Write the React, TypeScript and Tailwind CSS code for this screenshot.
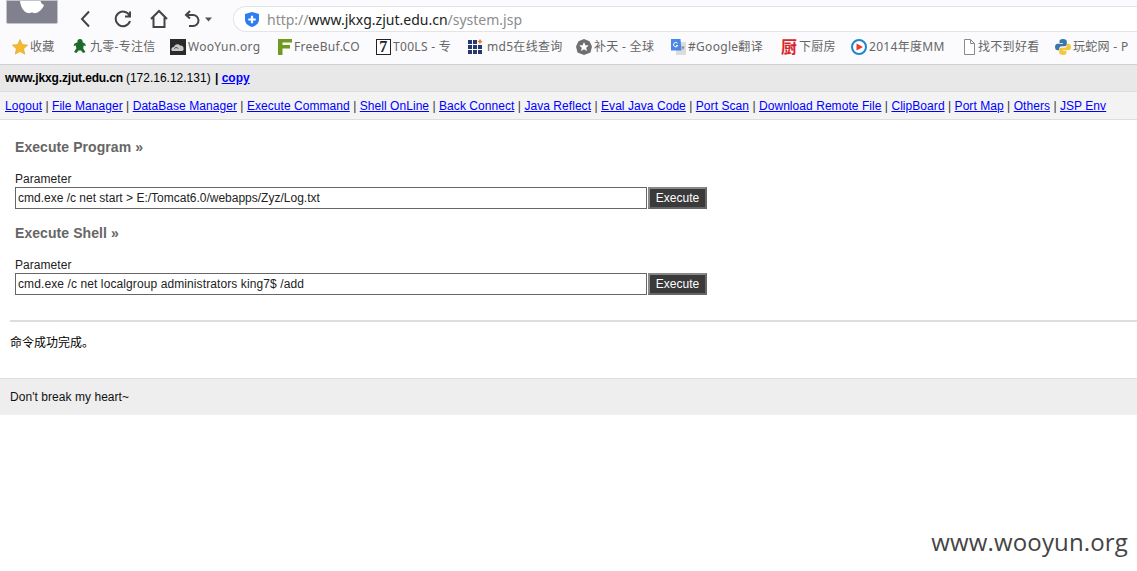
const navLinks = [
  "Logout",
  "File Manager",
  "DataBase Manager",
  "Execute Command",
  "Shell OnLine",
  "Back Connect",
  "Java Reflect",
  "Eval Java Code",
  "Port Scan",
  "Download Remote File",
  "ClipBoard",
  "Port Map",
  "Others",
  "JSP Env",
];

const FavIcon = ({ name }: { name: string }) => {
  if (name === "star")
    return (
      <svg width="16" height="16" viewBox="0 0 16 16">
        <path d="M8 .5l2.300 5 5.400.6-4 3.700 1.100 5.400L8 12.500l-4.800 2.700 1.100-5.400-4-3.700 5.400-.6z" fill="#f5b82e" stroke="#d99a1c" strokeWidth=".5" />
      </svg>
    );
  if (name === "turtle")
    return (
      <svg width="16" height="16" viewBox="0 0 16 16">
        <path d="M8 0c2 0 3 1.500 2.600 3.200L13 4.500l1 2.500-2.300-.6-.5 3.100 2.300 3.500-2.500 1-2-2.500H6.500l-2 2.500-2.500-1 2.300-3.500-.5-3.100L1.500 7l1-2.500 3-1.300C5 1.500 6 0 8 0z" fill="#1c6b2c" />
      </svg>
    );
  if (name === "wooyun")
    return (
      <svg width="16" height="16" viewBox="0 0 16 16">
        <rect width="16" height="16" fill="#2b2b2b" />
        <path d="M2 12c-1.500-2 0-4 2-4 .5-2.500 4-4 6-1.500 2-.5 4 1 3.500 3 .5 1.500-.5 2.500-1.500 2.500z" fill="#c9c9c9" />
        <path d="M4.500 9.500c1-1.500 3-1 3.500 0" fill="none" stroke="#2b2b2b" />
      </svg>
    );
  if (name === "freebuf")
    return (
      <svg width="14" height="16" viewBox="0 0 14 16">
        <path d="M0 0h14v3.500H4.500V6H12v3.500H4.500V16H0z" fill="#6f9a1f" />
      </svg>
    );
  if (name === "tools")
    return (
      <span className="flex h-[16px] w-[15px] items-center justify-center border border-[#222222] bg-white font-['Liberation_Serif',serif] text-[16px] leading-none font-bold text-[#222222]">
        7
      </span>
    );
  if (name === "md5")
    return (
      <svg width="17" height="16" viewBox="0 0 17 16">
        <g fill="#27386f">
          <rect x="0" y="1" width="4" height="4" />
          <rect x="5" y="1" width="4" height="4" />
          <rect x="0" y="6" width="4" height="4" />
          <rect x="5" y="6" width="4" height="4" />
          <rect x="10" y="6" width="4" height="4" />
          <rect x="0" y="11" width="4" height="4" />
          <rect x="5" y="11" width="4" height="4" />
          <rect x="10" y="11" width="4" height="4" />
        </g>
        <path d="M12 0l1 1.500 1.500 1-1.500 1-1 1.500-1-1.500-1.500-1 1.500-1z" fill="#e8792a" />
      </svg>
    );
  if (name === "butian")
    return (
      <svg width="16" height="16" viewBox="0 0 16 16">
        <path d="M8 0l5.500 2.200L16 7.500l-1.500 6L8 16l-6.500-2.500L0 7.500l2.500-5.300z" fill="#6e6e72" />
        <path d="M8 3l1.400 3.200 3.400.3-2.600 2.200.8 3.300L8 10.300 5 12l.8-3.300-2.600-2.200 3.400-.3z" fill="#ffffff" />
      </svg>
    );
  if (name === "google")
    return (
      <svg width="15" height="16" viewBox="0 0 15 16">
        <rect x="5" y="3" width="10" height="13" fill="#dcdcdc" />
        <path d="M0 0h9.500l1 11.500H0z" fill="#4a86e8" />
        <path d="M6.500 4.300A2.200 2.200 0 1 0 6.800 6.500H5" fill="none" stroke="#ffffff" strokeWidth="1" />
        <path d="M10.500 7.500h3l-1.500 3.500z" fill="#8a8a8a" />
      </svg>
    );
  if (name === "kitchen")
    return <span className="w-[16px] shrink-0 text-[16px] leading-none font-bold tracking-normal text-[#d9262c]">厨</span>;
  if (name === "youku")
    return (
      <svg width="16" height="16" viewBox="0 0 16 16">
        <circle cx="8" cy="8" r="7" fill="#ffffff" stroke="#1c86d1" strokeWidth="2" />
        <path d="M5.500 4.500L12 8l-6.500 3.500z" fill="#e8392f" />
      </svg>
    );
  if (name === "page")
    return (
      <svg width="14" height="16" viewBox="0 0 14 16" fill="#ffffff" stroke="#8a8a8a">
        <path d="M2.500 .5h6l4 4v11h-10zM8.500 .5v4h4" />
      </svg>
    );
  return (
    <svg width="16" height="16" viewBox="0 0 16 16">
      <path d="M8 0C5 0 4.500 1 4.500 2.500V4H8v.7H2.500C1 4.700 0 6 0 8s1 3.300 2.500 3.300h1.700V9.500c0-1.300 1-2.300 2.300-2.300h3.300c1.200 0 2-.9 2-2V2.500C11.800 1 10.500 0 8 0z" fill="#3a78ab" />
      <path d="M8 16c3 0 3.500-1 3.500-2.500V12H8v-.7h5.500c1.500 0 2.500-1.300 2.500-3.300s-1-3.300-2.500-3.300h-1.700v1.800c0 1.300-1 2.300-2.300 2.300H6.200c-1.200 0-2 .9-2 2v2.700C4.200 15 5.500 16 8 16z" fill="#f2c83c" />
    </svg>
  );
};

const bookmarks = [
  { icon: "star", label: "收藏", width: "w-[60px]" },
  { icon: "turtle", label: "九零-专注信", width: "w-[98px]" },
  { icon: "wooyun", label: "WooYun.org", width: "w-[108px]" },
  { icon: "freebuf", label: "FreeBuf.CO", width: "w-[98px]" },
  { icon: "tools", label: "T00LS - 专", width: "w-[92px]" },
  { icon: "md5", label: "md5在线查询", width: "w-[108px]" },
  { icon: "butian", label: "补天 - 全球", width: "w-[95px]" },
  { icon: "google", label: "#Google翻译", width: "w-[110px]" },
  { icon: "kitchen", label: "下厨房", width: "w-[70px]" },
  { icon: "youku", label: "2014年度MM", width: "w-[111px]" },
  { icon: "page", label: "找不到好看", width: "w-[93px]" },
  { icon: "python", label: "玩蛇网 - P", width: "w-[82px]" },
];

const browserFont = "font-['Noto_Sans','Noto_Sans_CJK_SC',sans-serif]";

const ExecForm = ({ title, value, valueClass }: { title: string; value: string; valueClass?: string }) => (
  <div>
    <h2 className="text-[14px] leading-[16px] font-bold tracking-[0.07px] text-[#666666]">{title} »</h2>
    <p className="mt-[17px] text-[12px] leading-[14px] tracking-[0.05px] text-[#222222]">Parameter</p>
    <div className="mt-[1px] flex h-[22px] items-stretch">
      <input
        readOnly
        value={value}
        className={`w-[632px] border border-[#666666] bg-white px-[2px] text-[12px] text-[#222222] outline-none ${valueClass ?? ""}`}
      />
      <button className="ml-[1px] w-[59px] border-2 border-t-[#888888] border-r-[#666666] border-b-[#666666] border-l-[#888888] bg-[#3a3a3a] text-[12px] text-white">
        Execute
      </button>
    </div>
  </div>
);

export default function App() {
  return (
    <div className="relative h-[571px] w-[1137px] overflow-hidden bg-white font-['Liberation_Sans','Noto_Sans_CJK_SC',sans-serif]">
      <div className="h-[65px] border-b border-[#cfcfd6] bg-[#fbfbfd]">
        <div className="flex h-[32px] items-start">
          <div className="ml-[6px] flex h-[24px] w-[52px] justify-center overflow-hidden rounded-b-[2px] border border-[#c4c4c8] bg-[#80808e]">
            <svg width="30" height="13" viewBox="0 0 30 13">
              <path d="M3 0c.5 5 3 11 8 12 2 .5 3-.5 4-.5s2 1 4 .5c4-1 7-5 8-8-2-1-3-2-3.500-4z" fill="#ffffff" />
            </svg>
          </div>
          <div className="ml-[18px] mt-[9px] flex items-center text-[#444444]">
            <svg width="20" height="20" viewBox="0 0 20 20" fill="none" stroke="currentColor" strokeWidth="2">
              <path d="M13 2.500L6 10l7 7.500" />
            </svg>
            <svg className="ml-[17px]" width="20" height="20" viewBox="0 0 20 20" fill="none" stroke="currentColor" strokeWidth="2">
              <path d="M16.500 6.500A7.300 7.300 0 1 0 17 12M17 2.500v5h-5" />
            </svg>
            <svg className="ml-[16px]" width="20" height="20" viewBox="0 0 20 20" fill="none" stroke="currentColor" strokeWidth="2">
              <path d="M2 10l8-8 8 8M4.500 8.500V18h11V8.500" />
            </svg>
            <svg className="ml-[15px]" width="18" height="20" viewBox="0 0 18 20" fill="none" stroke="currentColor" strokeWidth="2">
              <path d="M6 2L2 6l4 3.500M2.500 6H9a5 5 0 0 1 0 11H5" />
            </svg>
            <svg className="ml-[3px]" width="7" height="5" viewBox="0 0 7 5">
              <path d="M0 .5h7L3.500 4.500z" fill="#555555" />
            </svg>
          </div>
          <div className={`ml-[21px] mt-[6px] flex h-[26px] flex-1 items-center rounded-l-full border border-r-0 border-[#e4e4e8] bg-white pl-[11px] text-[14px] ${browserFont}`}>
            <svg width="14" height="15" viewBox="0 0 15 16">
              <path d="M7.500 0L15 2v6c0 4-3 6.800-7.500 8C3 14.800 0 12 0 8V2z" fill="#2d7cf0" />
              <path d="M6.300 4h2.400v2.800h2.800v2.400H8.700V12H6.300V9.200H3.500V6.800h2.800z" fill="#ffffff" />
            </svg>
            <span className="ml-[8px] text-[#8c8c8c]">
              http://<span className="text-[#222222]">www.jkxg.zjut.edu.cn</span>/system.jsp
            </span>
          </div>
        </div>
        <div className={`flex h-[30px] items-center pl-[12px] text-[12px] tracking-[0.3px] text-[#666666] ${browserFont}`}>
          {bookmarks.map((b) => (
            <div key={b.label} className={`flex shrink-0 items-center gap-[2px] whitespace-nowrap ${b.width}`}>
              <FavIcon name={b.icon} />
              <span>{b.label}</span>
            </div>
          ))}
        </div>
      </div>

      <div className="flex h-[27px] items-center border-b border-[#dddddd] bg-[#e8e8e8] pl-[5px] text-[12px] text-black">
        <span className="font-bold tracking-[-0.15px]">www.jkxg.zjut.edu.cn</span>
        <span className="ml-[3px] whitespace-pre">(172.16.12.131) </span>
        <span className="ml-[1px] font-bold whitespace-pre">
          | <a className="text-[#0000ff] underline">copy</a>
        </span>
      </div>

      <div className="flex h-[28px] items-center border-b border-[#dddddd] bg-[#f3f3f3] pl-[5px] text-[12px] tracking-[0.055px] whitespace-pre text-[#333333]">
        {navLinks.map((link, i) => (
          <span key={link}>
            {i > 0 && " | "}
            <a className="text-[#0000ff] underline">{link}</a>
          </span>
        ))}
      </div>

      <div className="flex flex-col gap-[16px] pt-[19px] pl-[15px]">
        <ExecForm title="Execute Program" value="cmd.exe /c net start > E:/Tomcat6.0/webapps/Zyz/Log.txt" />
        <ExecForm
          title="Execute Shell"
          value="cmd.exe /c net localgroup administrators king7$ /add"
          valueClass="tracking-[0.1px]"
        />
      </div>

      <div className="mt-[25px] ml-[10px] border-t-2 border-[#dddddd] pt-[14px] text-[12px] leading-[14px] text-black">
        命令成功完成。
      </div>

      <div className="mt-[28px] flex h-[37px] items-center border-t border-[#dddddd] bg-[#eeeeee] pl-[10px] text-[12px] tracking-[0.05px] text-[#111111]">
        Don't break my heart~
      </div>

      <div className="absolute right-[9px] bottom-[12px] font-['Open_Sans',sans-serif] text-[24px] leading-[34px] tracking-[0.15px] text-[#444444]">
        www.wooyun.org
      </div>
    </div>
  );
}
